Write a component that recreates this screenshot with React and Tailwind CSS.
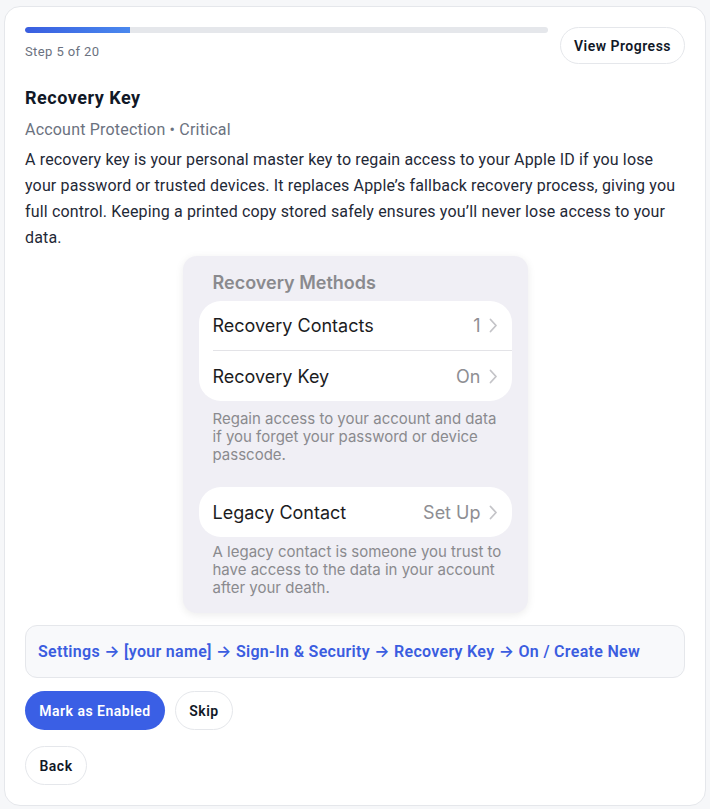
import React from "react";

const Chevron = () => (
  <svg width="9" height="15" viewBox="0 0 9 15" className="ml-2" fill="none">
    <path d="M1.5 1.5L7 7.5L1.5 13.5" stroke="#c4c4c8" strokeWidth="1.8" strokeLinecap="round" strokeLinejoin="round" />
  </svg>
);

const Row = ({ label, value, divider }) => (
  <div className="pl-[14px]">
    <div className={`flex items-center justify-between h-[50px] pr-[14px] ${divider ? "border-b border-[#e3e3e7]" : ""}`}>
      <span className="text-[18px] text-[#1c1c1e]">{label}</span>
      <span className="flex items-center text-[18px] text-[#8e8e93]">
        {value}
        <Chevron />
      </span>
    </div>
  </div>
);

// iOS settings screenshot, rebuilt as markup
const SettingsShot = () => (
  <div
    className="mx-auto w-[345px] rounded-[14px] bg-[#f0eff5] px-4 pt-4 pb-4 tracking-normal shadow-[0_2px_8px_rgba(0,0,0,0.08)]"
    style={{ fontFamily: "Inter, 'Noto Sans', sans-serif" }}
  >
    <div className="pl-[14px] text-[18px] leading-[22px] font-semibold text-[#8a8a8e]">Recovery Methods</div>
    <div className="mt-[7px] rounded-[22px] bg-white">
      <Row label="Recovery Contacts" value="1" divider />
      <Row label="Recovery Key" value="On" />
    </div>
    <p className="mt-[9px] pl-[14px] pr-2 text-[15px] leading-[18px] text-[#8a8a8e]">
      Regain access to your account and data if you forget your password or device passcode.
    </p>
    <div className="mt-[23px] rounded-[22px] bg-white">
      <Row label="Legacy Contact" value="Set Up" />
    </div>
    <p className="mt-[6px] pl-[14px] pr-1 text-[15px] leading-[18px] text-[#8a8a8e]">
      A legacy contact is someone you trust to have access to the data in your account after your death.
    </p>
  </div>
);

const Arrow = () => <span style={{ fontFamily: "Inter, sans-serif" }}>→</span>;

export default function App() {
  const step = 5;
  const total = 20;

  return (
    <div
      className="min-h-screen bg-[#f6f7f9] px-1 pt-[6px] pb-1 tracking-[0.3px]"
      style={{ fontFamily: "Roboto, 'Liberation Sans', sans-serif" }}
    >
      <div className="rounded-2xl border border-[#e5e7eb] bg-white p-5">
        {/* Header: progress + view button */}
        <div className="flex items-start gap-3">
          <div className="flex-1">
            <div className="h-1.5 overflow-hidden rounded-full bg-[#e5e7eb]">
              <div
                className="h-full rounded-l-full bg-gradient-to-r from-[#3a5ee0] to-[#4a88ee]"
                style={{ width: `${((step - 1) / total) * 100}%` }}
              />
            </div>
            <div className="mt-[9px] text-[13px] tracking-[0.4px] text-[#6b7280]">
              Step {step} of {total}
            </div>
          </div>
          <button className="h-[37px] w-[125px] rounded-full border border-[#e5e7eb] bg-white text-sm font-semibold tracking-[0.5px] text-[#111827]">
            View Progress
          </button>
        </div>

        <h2 className="mt-5 text-[18px] leading-7 font-bold tracking-[0.5px] text-[#111827]">Recovery Key</h2>
        <div className="mt-[6px] text-base tracking-[0.2px] text-[#6b7280]">Account Protection • Critical</div>
        <p className="mt-[5px] text-base leading-[26px] tracking-[0.15px] text-[#1f2937]">
          A recovery key is your personal master key to regain access to your Apple ID if you lose your password or
          trusted devices. It replaces Apple’s fallback recovery process, giving you full control. Keeping a printed
          copy stored safely ensures you’ll never lose access to your data.
        </p>

        <div className="mt-[5px]">
          <SettingsShot />
        </div>

        <div className="mt-3 rounded-xl border border-[#e5e7eb] bg-[#f8f9fb] px-3 py-[13px] text-base font-semibold text-[#3b5de0]">
          Settings <Arrow /> [your name] <Arrow /> Sign-In &amp; Security <Arrow /> Recovery Key <Arrow /> On / Create New
        </div>

        <div className="mt-[13px] flex gap-2.5">
          <button className="h-[39px] w-[140px] rounded-full bg-[#3a5fe5] text-sm font-semibold tracking-[0.5px] text-white">
            Mark as Enabled
          </button>
          <button className="h-[39px] w-[58px] rounded-full border border-[#e5e7eb] bg-white text-sm font-semibold tracking-[0.5px] text-[#111827]">
            Skip
          </button>
        </div>

        <div className="mt-4">
          <button className="h-[39px] w-[62px] rounded-full border border-[#e5e7eb] bg-white text-sm font-semibold tracking-[0.5px] text-[#111827]">
            Back
          </button>
        </div>
      </div>
    </div>
  );
}
